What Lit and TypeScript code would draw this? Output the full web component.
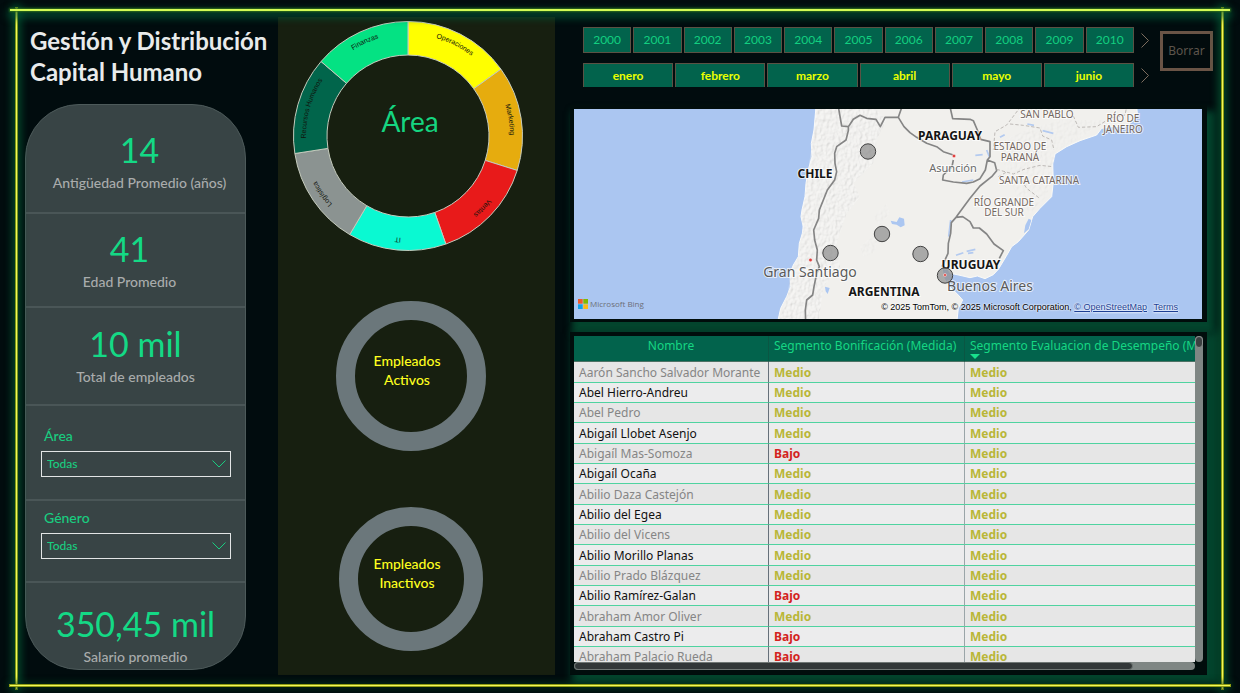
import { LitElement, html, svg, css } from "lit";
import { customElement, property, state } from "lit/decorators.js";
import { classMap } from "lit/directives/class-map.js";

interface Slice {
  name: string;
  from: number;
  to: number;
  color: string;
}

const SLICES: Slice[] = [
  { name: "Operaciones", from: 0, to: 54.3, color: "#ffff00" },
  { name: "Marketing", from: 54.3, to: 107.5, color: "#e6ac0e" },
  { name: "Ventas", from: 107.5, to: 160.7, color: "#e81a1a" },
  { name: "IT", from: 160.7, to: 210.6, color: "#0af9d2" },
  { name: "Logística", from: 210.6, to: 261.2, color: "#8b9391" },
  { name: "Recursos Humanos", from: 261.2, to: 310.6, color: "#01654b" },
  { name: "Finanzas", from: 310.6, to: 360, color: "#04e283" },
];

const YEARS = [2000, 2001, 2002, 2003, 2004, 2005, 2006, 2007, 2008, 2009, 2010];
const MONTHS = ["enero", "febrero", "marzo", "abril", "mayo", "junio"];

const ROWS: [string, string, string][] = [
  ["Aarón Sancho Salvador Morante", "Medio", "Medio"],
  ["Abel Hierro-Andreu", "Medio", "Medio"],
  ["Abel Pedro", "Medio", "Medio"],
  ["Abigaíl Llobet Asenjo", "Medio", "Medio"],
  ["Abigaíl Mas-Somoza", "Bajo", "Medio"],
  ["Abigaíl Ocaña", "Medio", "Medio"],
  ["Abilio Daza Castejón", "Medio", "Medio"],
  ["Abilio del Egea", "Medio", "Medio"],
  ["Abilio del Vicens", "Medio", "Medio"],
  ["Abilio Morillo Planas", "Medio", "Medio"],
  ["Abilio Prado Blázquez", "Medio", "Medio"],
  ["Abilio Ramírez-Galan", "Bajo", "Medio"],
  ["Abraham Amor Oliver", "Medio", "Medio"],
  ["Abraham Castro Pi", "Bajo", "Medio"],
  ["Abraham Palacio Rueda", "Bajo", "Medio"],
];

const polar = (r: number, deg: number): string => {
  const a = (deg * Math.PI) / 180;
  return `${(115 + r * Math.sin(a)).toFixed(2)} ${(115 - r * Math.cos(a)).toFixed(2)}`;
};

const slicePath = (s: Slice): string =>
  `M${polar(114.5, s.from)} A114.5 114.5 0 0 1 ${polar(114.5, s.to)} ` +
  `L${polar(81, s.to)} A81 81 0 0 0 ${polar(81, s.from)}Z`;

@customElement("area-donut")
export class AreaDonut extends LitElement {
  static styles = css`
    :host { display: grid; width: 230px; height: 230px; }
    .chart, .title { grid-area: 1 / 1; }
    .chart { width: 100%; height: 100%; }
    .title {
      place-self: center;
      margin: 0;
      padding: 0 0 30px 4px;
      font: 400 28px/36px Lato, sans-serif;
      color: #15d580;
    }
    .slice { stroke: #c5cbbd; stroke-width: 1; }
    .name { font: 7px "Liberation Sans", sans-serif; fill: #10140c; text-anchor: middle; }
    .guide { fill: none; }
  `;
  render() {
    return html`
      <svg class="chart" viewBox="0 0 230 230" aria-hidden="true">
        ${SLICES.map(
          (s, i) => svg`
            <path class="slice" d=${slicePath(s)} fill=${s.color}></path>
            <path class="guide" id=${"arc" + i}
              d=${`M${polar(102, s.from)} A102 102 0 0 1 ${polar(102, s.to)}`}></path>
            <text class="name"><textPath href=${"#arc" + i} startOffset="50%">${s.name}</textPath></text>`
        )}
      </svg>
      <h2 class="title">Área</h2>
    `;
  }
}

@customElement("status-ring")
export class StatusRing extends LitElement {
  @property() label = "";
  @property() status = "";
  static styles = css`
    :host { display: grid; place-items: center; box-sizing: border-box; border: 19px solid #6b777b; border-radius: 50%; }
    .caption {
      margin: 0;
      padding: 0 7px 13px 0;
      font: 500 14px/19px Lato, sans-serif;
      color: #ffff1e;
      text-align: center;
    }
  `;
  render() {
    return html`<h2 class="caption">${this.label}<br />${this.status}</h2>`;
  }
}

@customElement("region-map")
export class RegionMap extends LitElement {
  static styles = css`
    :host { display: block; position: relative; height: 210px; overflow: hidden; background: #abc6f1; }
    .map { display: block; width: 100%; height: 100%; }
    .land { fill: #f1f0ed; stroke: #fafaf8; stroke-width: 3; }
    .water { fill: #abc6f1; }
    .border { fill: none; stroke: #858585; stroke-width: 5; stroke-linejoin: round; }
    .state { fill: none; stroke: #bdb9b6; stroke-width: 3; stroke-dasharray: 10 6; }
    .stream { fill: none; stroke: #b3caf0; stroke-width: 5; }
    text {
      font-family: "Noto Sans", sans-serif;
      text-anchor: middle;
      paint-order: stroke;
      stroke: #ffffff;
      stroke-width: 2px;
      stroke-opacity: 0.7;
    }
    .country { font-size: 12px; font-weight: 700; fill: #151515; }
    .region { font-size: 10px; fill: #746862; }
    .city { font-size: 14px; fill: #5a5a5a; }
    .town { font-size: 11px; fill: #6a6a6a; }
    .pin { fill: #8e8e8e; fill-opacity: 0.72; stroke: #424242; stroke-width: 1; }
    .capital { fill: #e0413f; stroke: #ffffff; stroke-width: 0.5; }
    .brand {
      position: absolute;
      left: 4px;
      bottom: 9px;
      display: flex;
      align-items: center;
      gap: 2px;
      font: 8px/12px "Open Sans", sans-serif;
      color: #6b6f78;
    }
    .logo { width: 10px; height: 10px; }
    .credits {
      position: absolute;
      right: 24px;
      bottom: 6px;
      font: 9px/12px "Liberation Sans", sans-serif;
      color: #000;
      text-shadow: 0 0 2px #fff, 0 0 2px #fff;
      white-space: nowrap;
    }
    .credits a { color: #1c3f94; }
    .credits a + a { margin-left: 4px; }
  `;
  render() {
    return html`
      <svg class="map" viewBox="0 0 628 210" preserveAspectRatio="xMidYMid slice" role="img" aria-label="Mapa de empleados">
        <defs>
          <filter id="relief" x="0" y="0" width="100%" height="100%">
            <feTurbulence type="fractalNoise" baseFrequency="0.11 0.08" numOctaves="3" seed="8" result="n"></feTurbulence>
            <feDiffuseLighting in="n" surfaceScale="4" lighting-color="#ffffff" result="l">
              <feDistantLight azimuth="220" elevation="62"></feDistantLight>
            </feDiffuseLighting>
            <feComposite in="l" in2="SourceGraphic" operator="in"></feComposite>
          </filter>
        </defs>
        <g transform="translate(166 -9) scale(0.33333)">
          <path class="land" d="M228 20L222 90 214 130 216 170 205 210 198 250 195 290 186 330 183 350 190 380 187 400 178 430 175 470 160 495 150 520 152 560 140 590 122 625 112 670H650L655 625 668 600 650 580 628 560 612 535 606 505 616 498 632 520 660 526 690 533 712 528 735 536 760 524 775 508 798 470 815 440 835 425 866 390 878 350 900 325 935 290 940 245 938 192 945 162 980 140 1020 122 1070 105 1085 85 1120 80 1160 78 1180 62 1192 40 1190 20Z"></path>
          <g filter="url(#relief)" opacity="0.4">
            <path d="M230 20L216 130 205 210 195 290 184 350 188 400 176 470 152 520 142 590 114 670H235L250 560 300 500 290 430 320 340 360 290 340 250 400 190 410 120 440 60 400 20Z"></path>
          </g>
          <g filter="url(#relief)" opacity="0.15">
            <path d="M360 440L405 400 420 420 400 460 370 470ZM400 350L440 310 450 340 420 380ZM770 130L860 90 960 60 1100 60 1010 120 950 150 930 250 920 290 870 340 830 290Z"></path>
          </g>
          <path class="water" d="M452 362l18 4 8-14 14 4 2 20-12 6-12-8-14-2zM255 560l14 4-6 18-6-8zM866 356l8 4-8 28-14 12 4-24z"></path>
          <path class="stream" d="M648 466l22-8M680 454l26-6M684 460l16-2M706 166l22-2M632 360l-6 50M740 150l8 20M908 92l32 8M780 112l14-8M862 72l20 4M700 240l-34 6"></path>
          <path class="border" d="M295 20L305 78 325 80 340 58 360 46 380 55 408 58 421 80 435 52 475 52 486 20M325 80V92L318 120 290 140 284 160 285 190 290 215 284 240 262 270 250 300 238 330 236 355 221 390 224 420 232 450 230 480 238 500 230 520 222 560 218 585 200 600 196 630 197 670M475 52L492 80 510 98 530 112 560 130 590 140 610 155 640 165M640 180L636 200 610 225 608 240 640 246 680 250 700 246 720 236 736 210 742 180 750 170 750 125 722 118 712 90 700 62 690 58 638 56 630 20M742 180L764 188 770 212 755 230 720 258 690 295 664 330 648 352 634 368 632 400 625 430 624 460 606 500M648 352L668 350 690 365 700 384 718 384 740 402 762 432 790 452 778 475"></path>
          <path class="state" d="M842 20L800 75 765 95 760 150M810 72L850 76 900 84 908 108 935 120 942 150M770 208L820 222 852 208 900 196 938 200M836 228L860 265 900 296M1000 48L1015 82 1070 80 1110 55 1155 45 1160 20M775 230L800 216"></path>
        </g>
        <text class="country" x="376" y="31">PARAGUAY</text>
        <text class="country" x="241" y="69">CHILE</text>
        <text class="country" x="397" y="160">URUGUAY</text>
        <text class="country" x="310" y="187">ARGENTINA</text>
        <text class="region" x="473" y="9">SAN PABLO</text>
        <text class="region" x="549" y="13">RÍO DE</text>
        <text class="region" x="549" y="24">JANEIRO</text>
        <text class="region" x="446" y="41">ESTADO DE</text>
        <text class="region" x="446" y="52">PARANÁ</text>
        <text class="region" x="465" y="75">SANTA CATARINA</text>
        <text class="region" x="430" y="97">RÍO GRANDE</text>
        <text class="region" x="430" y="107">DEL SUR</text>
        <text class="town" x="379" y="63">Asunción</text>
        <text class="city" x="236" y="168">Gran Santiago</text>
        <text class="city" x="416" y="182">Buenos Aires</text>
        <circle class="capital" cx="380" cy="47" r="1.8"></circle>
        <circle class="capital" cx="236.500" cy="151" r="1.800"></circle>
        <circle class="pin" cx="294" cy="42.500" r="7.700"></circle>
        <circle class="pin" cx="308" cy="125" r="7.700"></circle>
        <circle class="pin" cx="256.500" cy="144" r="7.700"></circle>
        <circle class="pin" cx="346.500" cy="145" r="7.700"></circle>
        <circle class="pin" cx="371" cy="166.500" r="7.700"></circle>
        <circle class="capital" cx="371" cy="166" r="1.500"></circle>
      </svg>
      <div class="brand">
        <svg class="logo" viewBox="0 0 10 10" aria-hidden="true">
          <path fill="#f0592b" d="M0 0h4.700v4.700H0z"></path>
          <path fill="#7fba00" d="M5.300 0H10v4.700H5.300z"></path>
          <path fill="#12a0e8" d="M0 5.300h4.700V10H0z"></path>
          <path fill="#fdb913" d="M5.300 5.300H10V10H5.300z"></path>
        </svg>
        Microsoft Bing
      </div>
      <div class="credits">
        © 2025 TomTom, © 2025 Microsoft Corporation,
        <a href="#osm">© OpenStreetMap</a> <a href="#terms">Terms</a>
      </div>
    `;
  }
}

@customElement("app-root")
export class AppRoot extends LitElement {
  @state() private year: number | null = null;
  @state() private month: string | null = null;

  static styles = css`
    :host {
      display: block;
      font-family: Lato, sans-serif;
      color: #a9acac;
    }
    * { box-sizing: border-box; }
    .page {
      position: relative;
      display: grid;
      grid-template-columns: 253px 277px minmax(0, 1fr);
      height: 100vh;
      min-height: 660px;
      padding: 17px 27px 18px 25px;
      overflow: hidden;
      background: #010c0e;
    }
    .line { position: absolute; background: #f2f95a; pointer-events: none; }
    .top, .bottom { left: 10px; right: 10px; height: 1px; }
    .top { top: 9px; height: 2px; background: #d3fb55; box-shadow: 0 0 2px 1px #2c6a1c, 0 4px 8px 2px #035a39; }
    .bottom { bottom: 7px; box-shadow: 0 0 0 1px #8f9c12, 0 0 7px 2px #06351d; }
    .left, .right { top: 8px; bottom: 4px; width: 1px; }
    .left { left: 16px; box-shadow: 0 0 0 1px #7f9a16, 0 0 8px 3px #055a33; }
    .right { right: 17px; box-shadow: 0 0 0 1px #8f9c12, 0 0 8px 3px #055a33; }

    .side { display: flex; flex-direction: column; width: 221px; padding-bottom: 5px; min-height: 0; }
    .heading {
      margin: 0;
      padding: 8px 0 0 5px;
      height: 87px;
      font: 700 24px/31px Lato, sans-serif;
      color: #e9ebeb;
      white-space: nowrap;
    }
    .card {
      flex: 1;
      display: grid;
      grid-template-rows: 108fr 94fr 99fr 95fr 83fr 87fr;
      border: 1px solid #4d5a5a;
      border-radius: 54px;
      background: #384445;
      overflow: hidden;
    }
    .cell + .cell { border-top: 2px solid #4a5657; }
    .kpi { display: flex; flex-direction: column; align-items: center; text-align: center; }
    .seniority { padding: 24px 0 0 8px; }
    .age { padding: 14px 12px 0 0; }
    .people { padding-top: 15px; }
    .salary { padding-top: 20px; }
    .value { font-size: 34px; line-height: 42px; color: #14d985; }
    .label { font-size: 14px; line-height: 24px; font-weight: 500; }
    .filter { display: flex; flex-direction: column; padding: 20px 14px 0 15px; }
    .gender { padding-top: 7px; }
    .filter-label { padding-left: 3px; font-size: 14px; line-height: 20px; font-weight: 500; color: #19cd80; }
    .picker { display: grid; align-items: center; margin-top: 5px; }
    .select, .caret { grid-area: 1 / 1; }
    .select {
      appearance: none;
      height: 26px;
      padding: 0 5px;
      border: 1px solid #e2e5e5;
      border-radius: 0;
      background: transparent;
      font: 500 12px/20px Lato, sans-serif;
      color: #19cd80;
    }
    .caret { justify-self: end; width: 14px; height: 8px; margin-right: 5px; fill: none; stroke: #19cd80; stroke-width: 1; pointer-events: none; }

    .areas {
      display: flex;
      flex-direction: column;
      align-items: center;
      padding: 4px 12px 0 0;
      background: #171f10;
    }
    .donut { margin-right: 5px; }
    .active { flex: none; width: 150px; height: 150px; margin-top: 50px; }
    .inactive { flex: none; width: 144px; height: 144px; margin-top: 56px; }

    .main { display: flex; flex-direction: column; min-width: 0; min-height: 0; padding-left: 15px; }
    .controls {
      display: grid;
      grid-template: 26px 24px / 1fr 16px 53px;
      gap: 10px 5px;
      padding: 10px 0 0 13px;
      margin-bottom: 18px;
    }
    .tiles { display: flex; gap: 2px; }
    .tile {
      flex: 1;
      min-width: 0;
      padding: 0;
      border: 1px solid #5a5244;
      background: #02634c;
      color: #12cf80;
      font: 12px/20px Lato, sans-serif;
    }
    .month { border-bottom: 0; font-weight: 700; color: #eaff00; }
    .on { outline: 1px solid #14d985; }
    .next { display: grid; align-items: center; justify-items: start; padding: 0 2px; border: 0; background: none; }
    .arrow { width: 8px; height: 15px; fill: none; stroke: #7d6d5e; stroke-width: 1; }
    .clear {
      grid-column: 3;
      grid-row: 1 / span 2;
      height: 40px;
      margin-top: 4px;
      padding: 0;
      border: 3px solid #6a5446;
      background: #020b0d;
      color: #5d554c;
      font: 12px/20px "Noto Sans", sans-serif;
    }

    .frame { margin-right: 6px; background: #010d0c; box-shadow: 7px 5px 8px 5px #04452e; }
    .map-frame { padding: 4px 5px 3px 4px; margin-bottom: 10px; box-shadow: 5px 9px 7px 3px #04452e; }
    .table-frame {
      flex: 1;
      min-height: 0;
      display: grid;
      grid-template: minmax(0, 1fr) 8px / minmax(0, 1fr) 8px;
      padding: 4px 4px 5px;
    }
    .viewport { overflow: hidden; }
    .data {
      width: 100%;
      border-collapse: separate;
      border-spacing: 0;
      table-layout: fixed;
      font: 12px/17px "Noto Sans", sans-serif;
    }
    .c1 { width: 194px; }
    .c2 { width: 196px; }
    .data th {
      height: 26px;
      padding: 1px 0 0 5px;
      overflow: hidden;
      vertical-align: top;
      text-align: left;
      font-weight: 400;
      color: #16d683;
      background: #02634c;
      border-bottom: 1px solid #4d7265;
      white-space: nowrap;
    }
    .data th:first-child { text-align: center; padding: 1px 0 0; }
    .data th + th, .data td + td { border-left: 1px solid #0a5643; }
    .sort { display: block; width: 10px; height: 5px; fill: #18e08c; }
    .data td {
      height: 20px;
      padding: 0 5px;
      overflow: hidden;
      white-space: nowrap;
      border-bottom: 1px solid #4fd3a0;
      background: #ececed;
      color: #111;
    }
    .data tr:nth-child(3n + 1) td { height: 21px; }
    .data tr:nth-child(odd) td { background: #e6e6e6; color: #858585; }
    .data td + td { border-left-color: #9aa5a8; }
    .data td:nth-child(2) { border-left-color: #66707a; }
    .data tbody tr td.grade { font-weight: 700; color: #b9b637; }
    .data tbody tr td.low { color: #d32320; }
    .track { background: #7f8684; border-radius: 4px; }
    .vthumb { height: 12px; border-radius: 4px; border: 1px solid #8a908e; background: #3b3f40; }
    .hthumb { width: 90%; height: 8px; border-radius: 4px; border: 1px solid #6f7674; background: #323738; }
  `;

  private clear() {
    this.year = null;
    this.month = null;
  }

  private picker(id: string, label: string, options: string[]) {
    return html`
      <label class="filter-label" for=${id}>${label}</label>
      <div class="picker">
        <select class="select" id=${id}>
          <option>Todas</option>
          ${options.map((o) => html`<option>${o}</option>`)}
        </select>
        <svg class="caret" viewBox="0 0 14 8" aria-hidden="true"><path d="M0.500 0.500L7 7 13.500 0.500"></path></svg>
      </div>
    `;
  }

  private kpi(kind: string, value: string, label: string) {
    return html`
      <div class="cell kpi ${kind}">
        <span class="value">${value}</span>
        <span class="label">${label}</span>
      </div>
    `;
  }

  private next(label: string) {
    return html`
      <button class="next" aria-label=${label}>
        <svg class="arrow" viewBox="0 0 8 15" aria-hidden="true"><path d="M0.500 0.500L7.500 7.500 0.500 14.500"></path></svg>
      </button>
    `;
  }

  private grade(value: string) {
    return html`<td class=${classMap({ grade: true, low: value === "Bajo" })}>${value}</td>`;
  }

  render() {
    return html`
      <main class="page">
        <div class="side">
          <h1 class="heading">Gestión y Distribución<br />Capital Humano</h1>
          <section class="card">
            ${this.kpi("seniority", "14", "Antigüedad Promedio (años)")}
            ${this.kpi("age", "41", "Edad Promedio")}
            ${this.kpi("people", "10 mil", "Total de empleados")}
            <div class="cell filter">${this.picker("area", "Área", SLICES.map((s) => s.name))}</div>
            <div class="cell filter gender">${this.picker("genero", "Género", ["Femenino", "Masculino"])}</div>
            ${this.kpi("salary", "350,45 mil", "Salario promedio")}
          </section>
        </div>

        <section class="areas">
          <area-donut class="donut"></area-donut>
          <status-ring class="active" label="Empleados" status="Activos"></status-ring>
          <status-ring class="inactive" label="Empleados" status="Inactivos"></status-ring>
        </section>

        <section class="main">
          <div class="controls">
            <div class="tiles">
              ${YEARS.map(
                (y) => html`<button class=${classMap({ tile: true, on: this.year === y })}
                  @click=${() => (this.year = y)}>${y}</button>`
              )}
            </div>
            ${this.next("Años siguientes")}
            <button class="clear" @click=${this.clear}>Borrar</button>
            <div class="tiles">
              ${MONTHS.map(
                (m) => html`<button class=${classMap({ tile: true, month: true, on: this.month === m })}
                  @click=${() => (this.month = m)}>${m}</button>`
              )}
            </div>
            ${this.next("Meses siguientes")}
          </div>

          <div class="frame map-frame"><region-map></region-map></div>

          <div class="frame table-frame">
            <div class="viewport">
              <table class="data">
                <colgroup><col class="c1" /><col class="c2" /><col /></colgroup>
                <thead>
                  <tr>
                    <th scope="col">Nombre</th>
                    <th scope="col">Segmento Bonificación (Medida)</th>
                    <th scope="col">
                      Segmento Evaluacion de Desempeño (Medida)
                      <svg class="sort" viewBox="0 0 10 5" aria-hidden="true"><path d="M0 0H10L5 5Z"></path></svg>
                    </th>
                  </tr>
                </thead>
                <tbody>
                  ${ROWS.map(
                    ([name, bonus, review]) => html`<tr><td>${name}</td>${this.grade(bonus)}${this.grade(review)}</tr>`
                  )}
                </tbody>
              </table>
            </div>
            <div class="track"><div class="vthumb"></div></div>
            <div class="track"><div class="hthumb"></div></div>
          </div>
        </section>

        <div class="line left"></div>
        <div class="line right"></div>
        <div class="line top"></div>
        <div class="line bottom"></div>
      </main>
    `;
  }
}
